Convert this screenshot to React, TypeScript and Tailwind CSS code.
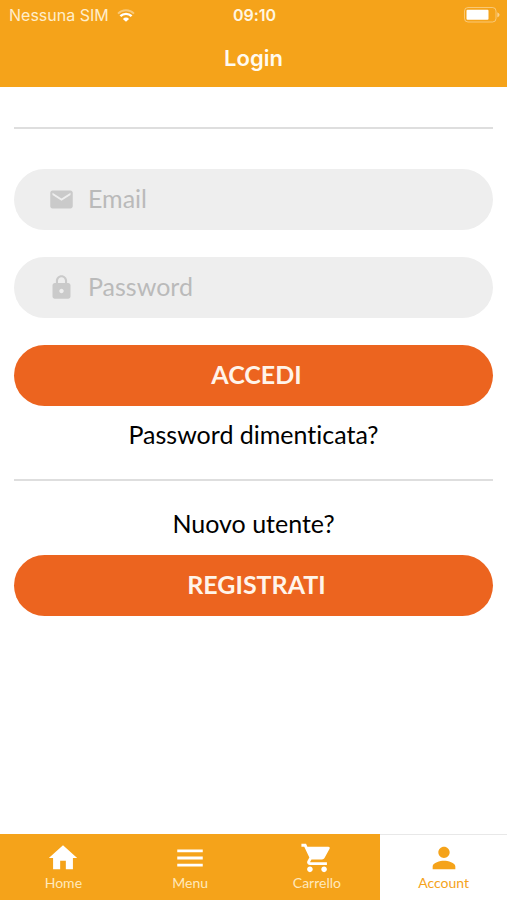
import type { ReactNode } from "react";
import type { IconType } from "react-icons";
import { MdEmail, MdHome, MdLock, MdMenu, MdPerson, MdShoppingCart } from "react-icons/md";

function WifiIcon() {
  return (
    <svg viewBox="0 0 18 13" className="h-[13px] w-[18px]" fill="none" aria-hidden="true">
      <path d="M1 4.6A11.5 11.5 0 0 1 17 4.6" stroke="#fff" strokeOpacity="0.4" strokeWidth="2" />
      <path d="M3.4 7.2A7.8 7.8 0 0 1 14.6 7.2" stroke="#fff" strokeWidth="2.4" />
      <path d="M9 12.8L5.9 9.9A4.4 4.4 0 0 1 12.1 9.9Z" fill="#fff" />
    </svg>
  );
}

function BatteryIcon() {
  return (
    <svg viewBox="0 0 36 16" className="h-4 w-9" fill="none" aria-hidden="true">
      <rect x="0.5" y="0.5" width="31.5" height="14.5" rx="3.5" stroke="#fff" strokeOpacity="0.4" />
      <rect x="2.5" y="2.8" width="22" height="10" rx="1" fill="#fff" />
      <path d="M33.3 5.2Q35.6 6.2 35.6 7.8Q35.6 9.4 33.3 10.4Z" fill="#fff" fillOpacity="0.5" />
    </svg>
  );
}

function Field({ id, type, label, Icon }: { id: string; type: string; label: string; Icon: IconType }) {
  return (
    <div className="flex h-[61px] items-center gap-[13px] rounded-full bg-[#eeeeee] pr-8 pl-[34px]">
      <label htmlFor={id} aria-label={label}>
        <Icon size={27} className="text-[#cacaca]" />
      </label>
      <input
        id={id}
        type={type}
        placeholder={label}
        className="min-w-0 flex-1 bg-transparent pb-1 text-[25px] leading-8 text-black outline-none placeholder:text-[#bababa]"
      />
    </div>
  );
}

function PillButton({ children, type }: { children: ReactNode; type: "submit" | "button" }) {
  return (
    <button
      type={type}
      className="h-[61px] w-full rounded-full bg-[#ec641f] pb-1 pl-1.5 text-[25px] leading-8 font-bold text-[#fff4ea]"
    >
      {children}
    </button>
  );
}

const tabs = [
  { label: "Home", Icon: MdHome, active: false },
  { label: "Menu", Icon: MdMenu, active: false },
  { label: "Carrello", Icon: MdShoppingCart, active: false },
  { label: "Account", Icon: MdPerson, active: true },
];

export default function App() {
  return (
    <div className="flex min-h-screen flex-col bg-white font-['Lato',sans-serif] text-black [font-variant-ligatures:none]">
      <header className="bg-[#f5a31a] font-['Inter',sans-serif] text-white">
        <div className="grid h-[30px] grid-cols-3 items-center pr-[7px] pl-[9px] text-base">
          <div className="flex items-center gap-2 whitespace-nowrap text-[#ffeecb]">
            Nessuna SIM
            <WifiIcon />
          </div>
          <div className="text-center font-semibold text-[#fff6e2]">09:10</div>
          <div className="flex justify-end">
            <BatteryIcon />
          </div>
        </div>
        <h1 className="h-[57px] pt-3 text-center text-[22px] leading-8 font-semibold text-[#fffaf0]">Login</h1>
      </header>

      <main className="flex-1 px-3.5 pt-10">
        <hr className="border-t-2 border-[#dedede]" />
        <form className="mt-10 flex flex-col gap-[27px]" onSubmit={(e) => e.preventDefault()}>
          <Field id="email" type="email" label="Email" Icon={MdEmail} />
          <Field id="password" type="password" label="Password" Icon={MdLock} />
          <PillButton type="submit">ACCEDI</PillButton>
        </form>
        <a href="#password" className="mt-2.5 block text-center text-[25px] leading-9">
          Password dimenticata?
        </a>
        <hr className="mt-[27px] border-t-2 border-[#dedede]" />
        <p className="mt-6 mb-3.5 text-center text-[25px] leading-9">Nuovo utente?</p>
        <PillButton type="button">REGISTRATI</PillButton>
      </main>

      <nav className="grid h-[66px] grid-cols-4">
        {tabs.map(({ label, Icon, active }) => (
          <a
            key={label}
            href={"#" + label.toLowerCase()}
            aria-current={active ? "page" : undefined}
            className={
              active
                ? "flex flex-col items-center border-t border-[#e8e8e8] bg-white pt-1.5 text-[#f5a31a]"
                : "flex flex-col items-center border-t border-[#f5a31a] bg-[#f5a31a] pt-1.5 text-white"
            }
          >
            <Icon size={34} />
            <span className={active ? "text-sm leading-4" : "text-sm leading-4 text-[#ffe9bd]"}>{label}</span>
          </a>
        ))}
      </nav>
    </div>
  );
}
